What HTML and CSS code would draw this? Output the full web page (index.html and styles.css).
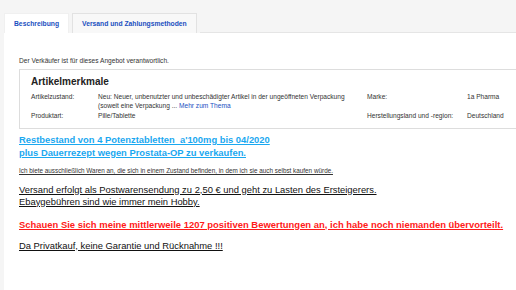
FILE: index.html
```html
<!DOCTYPE html>
<html lang="de">
<head>
    <meta charset="UTF-8">
    <title>Beschreibung</title>
    <link rel="stylesheet" href="styles.css">
</head>
<body>
    <div class="page">
        <div class="tabs">
            <div class="tab active">Beschreibung</div>
            <div class="tab">Versand und Zahlungsmethoden</div>
            <div class="tab-fill"></div>
        </div>
        <div class="panel">
            <p class="seller">Der Verkäufer ist für dieses Angebot verantwortlich.</p>
            <div class="specs">
                <h2>Artikelmerkmale</h2>
                <div class="spec-grid">
                    <div class="label">Artikelzustand:</div>
                    <div class="value">Neu: Neuer, unbenutzter und unbeschädigter Artikel in der ungeöffneten Verpackung<br>(soweit eine Verpackung ... <a href="#">Mehr zum Thema</a></div>
                    <div class="label">Marke:</div>
                    <div class="value">1a Pharma</div>
                    <div class="label">Produktart:</div>
                    <div class="value">Pille/Tablette</div>
                    <div class="label">Herstellungsland und -region:</div>
                    <div class="value">Deutschland</div>
                </div>
            </div>
            <div class="desc">
                <p class="promo">Restbestand von 4 Potenztabletten&nbsp; a'100mg bis 04/2020<br>plus Dauerrezept wegen Prostata-OP zu verkaufen.</p>
                <p class="small">Ich biete ausschließlich Waren an, die sich in einem Zustand befinden, in dem ich sie auch selbst kaufen würde.</p>
                <p class="normal">Versand erfolgt als Postwarensendung zu 2,50 € und geht zu Lasten des Ersteigerers.<br>Ebaygebühren sind wie immer mein Hobby.</p>
                <p class="warn">Schauen Sie sich meine mittlerweile 1207 positiven Bewertungen an, ich habe noch niemanden übervorteilt.</p>
                <p class="normal">Da Privatkauf, keine Garantie und Rücknahme !!!</p>
            </div>
        </div>
    </div>
</body>
</html>
```

FILE: styles.css
```css
body {
    margin: 0;
    background-color: #f5f5f5;
    font-family: "Liberation Sans", Arial, sans-serif;
    color: #333;
}
.page {
    padding-left: 4px;
    height: 290px;
    overflow: hidden;
}
.tabs {
    display: flex;
    align-items: flex-end;
    padding-top: 13px;
}
.tab {
    height: 20px;
    line-height: 20px;
    padding: 0 9px;
    margin-right: 3px;
    font-size: 6.75px;
    font-weight: bold;
    color: #1a4fbf;
    background-color: #f8f8f8;
    border: 1px solid #e2e2e2;
    border-bottom: none;
    box-sizing: border-box;
}
.tab.active {
    background-color: #fff;
    border-color: #f0f0f0;
}
.tab-fill {
    flex: 1;
    border-bottom: 1px solid #e5e5e5;
}
.panel {
    background-color: #fff;
    padding: 24px 0 0 15px;
    height: 300px;
}
.seller {
    margin: 0 0 5px;
    font-size: 6.6px;
}
.specs {
    border: 1px solid #ddd;
    border-right: none;
    padding: 6px 0 7px 11px;
    margin-right: -10px;
}
.specs h2 {
    margin: 0 0 6px;
    font-size: 10px;
    color: #222;
}
.spec-grid {
    display: grid;
    grid-template-columns: 67px 269px 100px auto;
    row-gap: 2px;
    font-size: 6.6px;
    line-height: 8.5px;
}
.spec-grid a {
    color: #1a4fbf;
    text-decoration: none;
}
.desc p {
    text-decoration: underline;
}
.promo {
    margin: 4px 0 0;
    font-size: 9.4px;
    line-height: 13px;
    font-weight: bold;
    color: #1aa8f0;
}
.small {
    margin: 8px 0 0;
    font-size: 6.35px;
}
.normal {
    margin: 10px 0 0;
    font-size: 9.4px;
    line-height: 12px;
    color: #111;
}
.warn {
    margin: 11px 0 0;
    font-size: 9.45px;
    font-weight: bold;
    color: #ff1a1a;
}
```
